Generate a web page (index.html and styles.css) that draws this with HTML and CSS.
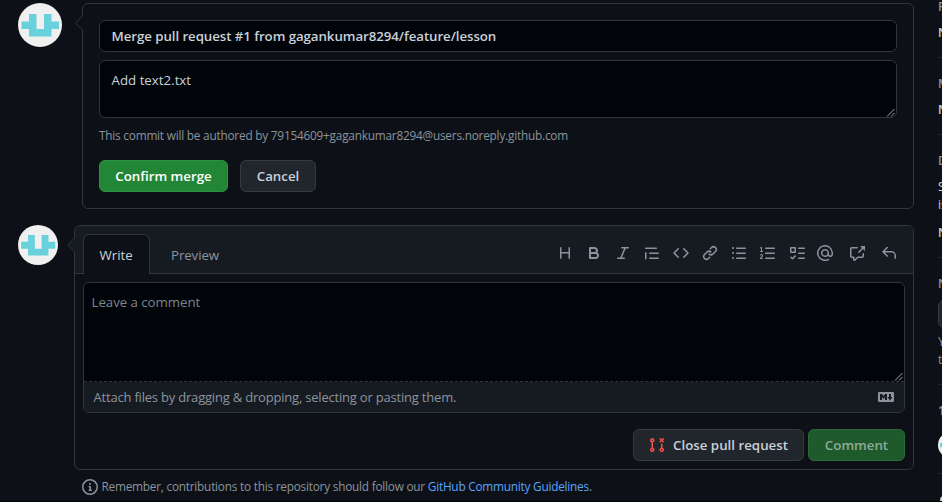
FILE: index.html
```html
<!DOCTYPE html>
<html lang="en">
<head>
<meta charset="utf-8">
<title>Pull request</title>
<link rel="stylesheet" href="styles.css">
</head>
<body>
<svg class="defs" width="0" height="0">
  <symbol id="avatar" viewBox="0 0 44 44"><rect width="44" height="44" fill="#f0f0f0"/><path fill="#69d1db" d="M11 11h7.500v15h7.500V11h7.500v7.500H41V26h-7.500v7.500h-22.500V26H3.500v-7.500H11z"/></symbol>
</svg>
<div class="page">
  <main class="thread">
    <section class="row merge-row">
      <svg class="avatar avatar-lg"><use href="#avatar"/></svg>
      <div class="box merge-box">
        <svg class="caret" viewBox="0 0 8 16"><path class="caret-dark" d="M8 .5L.7 8 8 15.500"/></svg>
        <div class="field title-field"><span class="t-title">Merge pull request #1 from gagankumar8294/feature/lesson</span></div>
        <div class="field body-field"><span class="t-add">Add text2.txt</span><svg class="grip" viewBox="0 0 9 9"><path d="M1 8.500L8.500 1M5 8.500L8.500 5"/></svg></div>
        <p class="author"><span class="t-author">This commit will be authored by 79154609+gagankumar8294@users.noreply.github.com</span></p>
        <div class="actions">
          <button class="btn confirm">Confirm merge</button>
          <button class="btn cancel">Cancel</button>
        </div>
      </div>
    </section>
    <section class="row comment-row">
      <svg class="avatar avatar-md"><use href="#avatar"/></svg>
      <div class="box comment-box">
        <svg class="caret" viewBox="0 0 8 16"><path class="caret-light" d="M8 .5L.7 8 8 15.500"/></svg>
        <header class="tabs">
          <div class="tab active"><span class="t-write">Write</span></div>
          <div class="tab preview"><span class="t-preview">Preview</span></div>
          <div class="tools">
            <svg class="icon" viewBox="0 0 16 16"><path d="M3.750 2a.75.75 0 01.75.75V7h7V2.750a.75.75 0 011.500 0v10.500a.75.75 0 01-1.500 0V8.500h-7v4.750a.75.75 0 01-1.500 0V2.750A.75.75 0 013.750 2z"/></svg>
            <svg class="icon" viewBox="0 0 16 16"><path fill-rule="evenodd" d="M4 2a1 1 0 00-1 1v10a1 1 0 001 1h5.500a3.500 3.500 0 001.852-6.470A3.500 3.500 0 008.500 2H4zm4.500 5a1.500 1.500 0 100-3H5v3h3.500zM5 9v3h4.500a1.500 1.500 0 000-3H5z"/></svg>
            <svg class="icon" viewBox="0 0 16 16"><path d="M6 2.750A.75.75 0 016.750 2h6.500a.75.75 0 010 1.500h-2.505l-3.858 9H9.250a.75.75 0 010 1.500h-6.500a.75.75 0 010-1.500h2.505l3.858-9H6.750A.75.75 0 016 2.750z"/></svg>
            <svg class="icon" viewBox="0 0 16 16"><path d="M1.750 2.500a.75.75 0 000 1.500h10.500a.75.75 0 000-1.500H1.750zm4 5a.75.75 0 000 1.500h8.500a.75.75 0 000-1.500h-8.500zm0 5a.75.75 0 000 1.500h8.500a.75.75 0 000-1.500h-8.500zM2.500 7.750a.75.75 0 00-1.500 0v6a.75.75 0 001.500 0v-6z"/></svg>
            <svg class="icon" viewBox="0 0 16 16"><path d="M4.720 3.220a.75.75 0 011.060 1.060L2.060 8l3.720 3.720a.75.75 0 11-1.060 1.060L.47 8.530a.75.75 0 010-1.060l4.250-4.250zm6.560 0a.75.75 0 10-1.060 1.060L13.940 8l-3.720 3.720a.75.75 0 101.060 1.060l4.250-4.250a.75.75 0 000-1.060l-4.250-4.250z"/></svg>
            <svg class="icon" viewBox="0 0 16 16"><path d="M7.775 3.275a.75.75 0 001.060 1.060l1.250-1.250a2 2 0 112.830 2.830l-2.500 2.500a2 2 0 01-2.830 0 .75.75 0 00-1.060 1.060 3.500 3.500 0 004.950 0l2.500-2.500a3.500 3.500 0 00-4.950-4.950l-1.250 1.250zm-4.690 9.640a2 2 0 010-2.830l2.500-2.500a2 2 0 012.830 0 .75.75 0 001.060-1.060 3.500 3.500 0 00-4.950 0l-2.500 2.500a3.500 3.500 0 004.950 4.950l1.250-1.250a.75.75 0 00-1.060-1.060l-1.250 1.250a2 2 0 01-2.830 0z"/></svg>
            <svg class="icon" viewBox="0 0 16 16"><path d="M2 4a1 1 0 100-2 1 1 0 000 2zm3.750-1.500a.75.75 0 000 1.500h8.500a.75.75 0 000-1.500h-8.500zm0 5a.75.75 0 000 1.500h8.500a.75.75 0 000-1.500h-8.500zm0 5a.75.75 0 000 1.500h8.500a.75.75 0 000-1.500h-8.500zM3 8a1 1 0 11-2 0 1 1 0 012 0zm-1 6a1 1 0 100-2 1 1 0 000 2z"/></svg>
            <svg class="icon" viewBox="0 0 16 16"><path d="M2.003 2.500a.5.5 0 00-.723-.447l-1.003.5a.5.5 0 00.446.895l.28-.14V6H.5a.5.5 0 000 1h2.006a.5.5 0 100-1h-.503V2.500zM5 3.250a.75.75 0 01.75-.75h8.500a.75.75 0 010 1.500h-8.500A.75.75 0 015 3.250zm0 5a.75.75 0 01.75-.75h8.500a.75.75 0 010 1.500h-8.500A.75.75 0 015 8.250zm0 5a.75.75 0 01.75-.75h8.500a.75.75 0 010 1.500h-8.500a.75.75 0 01-.75-.75zM.924 10.320a.851.851 0 01.147-.157A.66.66 0 011.500 10c.195 0 .306.068.374.146a.57.57 0 01.128.376c0 .453-.269.682-.8 1.078l-.035.025C.692 11.980 0 12.495 0 13.500a.5.5 0 00.5.5h2.003a.5.5 0 000-1H1.146c.132-.197.351-.372.654-.597l.047-.035c.47-.35 1.156-.858 1.156-1.845 0-.365-.118-.744-.377-1.038-.268-.303-.658-.484-1.126-.484-.48 0-.84.202-1.068.392a1.858 1.858 0 00-.348.384.5.5 0 00.84.543z"/></svg>
            <svg class="icon" viewBox="0 0 16 16"><path fill-rule="evenodd" d="M2.500 3.500v3h3v-3h-3zM2 2a1 1 0 00-1 1v4a1 1 0 001 1h4a1 1 0 001-1V3a1 1 0 00-1-1H2zm4.655 8.595a.75.75 0 010 1.060L4.030 14.280a.75.75 0 01-1.060 0l-1.500-1.500a.75.75 0 111.060-1.060l.97.97 2.095-2.095a.75.75 0 011.060 0zM9.750 2.500a.75.75 0 000 1.500h5.500a.75.75 0 000-1.500h-5.500zm0 5a.75.75 0 000 1.500h5.500a.75.75 0 000-1.500h-5.500zm0 5a.75.75 0 000 1.500h5.500a.75.75 0 000-1.500h-5.500z"/></svg>
            <svg class="icon mention" viewBox="0 0 16 16"><path d="M4.750 2.370a6.500 6.500 0 006.500 11.260.75.75 0 01.75 1.298 8 8 0 113.994-7.273.754.754 0 01.006.095v1.500a2.750 2.750 0 01-5.072 1.475A4 4 0 1112 8v1.250a1.250 1.250 0 002.500 0V7.867a6.500 6.500 0 00-9.750-5.496V2.370zM10.500 8a2.500 2.500 0 10-5 0 2.500 2.500 0 005 0z"/></svg>
            <svg class="icon wide" viewBox="0 0 16 16"><path d="M16 1.250v4.146a.25.25 0 01-.427.177L14.030 4.030l-3.750 3.750a.75.75 0 11-1.060-1.060l3.750-3.750-1.543-1.543A.25.25 0 0111.604 1h4.146a.25.25 0 01.25.25zM2.750 3.500a.25.25 0 00-.25.25v7.500c0 .138.112.25.25.25h2a.75.75 0 01.75.75v2.190l2.720-2.720a.75.75 0 01.53-.22h4.500a.25.25 0 00.25-.25v-2.500a.75.75 0 111.500 0v2.500A1.750 1.750 0 0113.250 13H9.060l-2.573 2.573A1.457 1.457 0 014 14.543V13H2.750A1.750 1.750 0 011 11.250v-7.500C1 2.784 1.784 2 2.750 2h5.500a.75.75 0 010 1.500h-5.500z"/></svg>
            <svg class="icon wide" viewBox="0 0 16 16"><path d="M6.780 1.970a.75.75 0 010 1.060L3.810 6h6.440A4.750 4.750 0 0115 10.750v2.500a.75.75 0 01-1.500 0v-2.500a3.250 3.250 0 00-3.250-3.250H3.810l2.970 2.970a.75.75 0 11-1.060 1.060L1.470 7.280a.75.75 0 010-1.060l4.250-4.250a.75.75 0 011.060 0z"/></svg>
          </div>
        </header>
        <div class="editor">
          <div class="input"><span class="t-leave">Leave a comment</span><svg class="grip" viewBox="0 0 9 9"><path d="M1 8.500L8.500 1M5 8.500L8.500 5"/></svg></div>
          <div class="attach"><span class="t-attach">Attach files by dragging &amp; dropping, selecting or pasting them.</span>
            <svg class="icon" viewBox="0 0 16 16"><path fill-rule="evenodd" d="M14.850 3H1.150C.52 3 0 3.520 0 4.150v7.690C0 12.480.52 13 1.150 13h13.690c.64 0 1.150-.52 1.150-1.150v-7.700C16 3.520 15.480 3 14.850 3zM9 11H7V8L5.500 9.920 4 8v3H2V5h2l1.500 2L7 5h2v6zm2.990.5L9.500 8H11V5h2v3h1.500l-2.510 3.500z"/></svg>
          </div>
        </div>
        <div class="submit">
          <button class="btn close"><svg class="icon" viewBox="0 0 16 16"><path d="M10.720 1.227a.75.75 0 011.060 0l.97.97.97-.97a.75.75 0 111.060 1.061l-.97.97.97.97a.75.75 0 01-1.060 1.060l-.97-.97-.97.97a.75.75 0 11-1.060-1.060l.97-.97-.97-.97a.75.75 0 010-1.061zM12.750 6.500a.75.75 0 00-.75.75v3.378a2.251 2.251 0 101.500 0V7.250a.75.75 0 00-.75-.75zm0 5.500a.75.75 0 100 1.500.75.75 0 000-1.500zM2.500 3.250a.75.75 0 111.500 0 .75.75 0 01-1.500 0zM3.250 1a2.250 2.250 0 00-.75 4.372v5.256a2.251 2.251 0 101.500 0V5.372A2.250 2.250 0 003.250 1zm0 11a.75.75 0 100 1.500.75.75 0 000-1.500z" fill-rule="evenodd"/></svg><span>Close pull request</span></button>
          <button class="btn comment" disabled>Comment</button>
        </div>
      </div>
    </section>
    <p class="note"><svg class="icon" viewBox="0 0 16 16"><path d="M8 1.500a6.500 6.500 0 100 13 6.500 6.500 0 000-13zM0 8a8 8 0 1116 0A8 8 0 010 8zm6.500-.25A.75.75 0 017.250 7h1a.75.75 0 01.75.75v2.750h.25a.75.75 0 010 1.500h-2a.75.75 0 010-1.500h.25v-2h-.25a.75.75 0 01-.75-.75zM8 6a1 1 0 100-2 1 1 0 000 2z" fill-rule="evenodd"/></svg><span class="t-note">Remember, contributions to this repository should follow our <a>GitHub Community Guidelines</a>.</span></p>
  </main>
  <aside class="side">
    <div class="item projects"><b>P</b><span>N</span></div>
    <div class="item milestone"><b>M</b><span>N</span></div>
    <div class="item development"><b>D</b><p>S<br>is</p><span>N</span></div>
    <div class="item notifications"><b>N</b><i class="side-btn"></i><p>Y<br>t</p></div>
    <div class="item participants"><b>1</b><svg class="avatar avatar-sm"><use href="#avatar"/></svg></div>
    <svg class="lock" viewBox="0 0 16 16"><path d="M4 4v2h-.25A1.750 1.750 0 002 7.750v5.500c0 .966.784 1.750 1.750 1.750h8.500V6H12V4a4 4 0 10-8 0zm6.500 2V4a2.500 2.500 0 10-5 0v2h5z"/></svg>
  </aside>
</div>
</body>
</html>
```
FILE: styles.css
```css
* { box-sizing: border-box; }
body {
  margin: 0;
  background: #0d1117;
  color: #c9d1d9;
  font: 13.3px/20px "Open Sans", "Noto Sans", sans-serif;
  overflow: hidden;
}
p { margin: 0; }
span { white-space: nowrap; }
.defs { position: absolute; }
.page { display: flex; width: 942px; height: 502px; overflow: hidden; border-bottom: 1px solid #02040a; }
.thread { width: 938px; flex: none; padding: 3px 24px 0 18px; }
.row { display: flex; align-items: flex-start; }
.avatar { flex: none; border-radius: 50%; display: block; }
.avatar-lg { width: 44px; height: 44px; margin-right: 20px; }
.avatar-md { width: 40px; height: 40px; margin-right: 16px; }
.box { position: relative; border: 1px solid #30363d; border-radius: 6px; }
.caret { position: absolute; left: -8px; width: 8px; height: 16px; stroke: #30363d; }
.caret-dark { fill: #0d1117; }
.caret-light { fill: #161b22; }
.merge-box { width: 832px; height: 206px; padding: 16px; }
.merge-box .caret { top: 11px; }
.field { border: 1px solid #30363d; border-radius: 6px; background: #010409; padding: 5px 12px 5px 11.5px; position: relative; }
.title-field { height: 32px; font-weight: 600; }
.t-title { letter-spacing: -.075px; }
.body-field { height: 58px; margin-top: 8px; padding-top: 9px; }
.grip { position: absolute; right: 1px; bottom: 0; width: 9px; height: 9px; fill: none; stroke: #b5b8bc; stroke-width: .9; }
.author { margin-top: 7px; color: #8b949e; font-size: 11.8px; }
.t-author { letter-spacing: -.21px; }
.actions { display: flex; gap: 12px; margin-top: 15px; }
.btn {
  height: 32px; padding: 0; border: 1px solid #363b42; border-radius: 6px;
  background: #21262d; color: #c9d1d9; font: 600 13.3px/20px "Open Sans", "Noto Sans", sans-serif;
  display: flex; align-items: center; justify-content: center; white-space: nowrap;
}
.confirm { width: 129px; background: #238636; border-color: #2f9142; color: #fff; }
.cancel { width: 76px; }
.comment-row { margin-top: 16px; }
.comment-box { width: 840px; height: 245px; }
.comment-box .caret { top: 11px; }
.tabs { height: 48px; display: flex; align-items: flex-end; padding-left: 8px; background: #161b22; border-bottom: 1px solid #30363d; border-radius: 5px 5px 0 0; }
.tab { height: 40px; padding: 10px 16px 0; margin-bottom: -1px; }
.preview { padding-top: 11px; margin-left: 5px; color: #8b949e; letter-spacing: -.1px; }
.active { width: 67px; padding-left: 15.5px; background: #0d1117; border: 1px solid #30363d; border-bottom: 0; border-radius: 6px 6px 0 0; }
.icon { width: 16px; height: 16px; flex: none; fill: #8b949e; }
.tools { margin-left: auto; padding-right: 16px; display: flex; gap: 13px; align-self: center; margin-top: 7px; }
.mention { margin-left: -1px; }
.wide { margin-left: 3px; }
.editor { margin: 8px 8px 0; height: 131px; border: 1px solid #30363d; border-radius: 6px; overflow: hidden; }
.input { height: 99px; background: #010409; border-bottom: 1px dashed #30363d; padding: 9px 7.5px; position: relative; color: #7d858f; }
.t-leave { letter-spacing: -.05px; }
.attach { height: 30px; padding: 0 10px 0 9.5px; display: flex; align-items: center; justify-content: space-between; background: #161b22; color: #8b949e; }
.t-attach { font-size: 13px; letter-spacing: -.2px; }
.submit { display: flex; justify-content: flex-end; gap: 4px; margin: 16px 8px 0; }
.close { width: 171px; gap: 8px; }
.close .icon { fill: #f85149; }
.comment { width: 97px; background: #1e5a2c; border-color: #296a38; color: #8fac96; }
.note { display: flex; align-items: center; gap: 3.5px; margin: 8px 0 0 64px; color: #8b949e; font-size: 11.8px; }
.t-note { letter-spacing: -.22px; margin-top: -2px; }
.note a { color: #58a6ff; }
.side { width: 4px; flex: none; overflow: hidden; font-size: 12px; line-height: 18px; }
.item { display: flow-root; border-bottom: 1px solid #21262d; }
.item b, .item span { display: block; }
.item b { color: #8b949e; font-weight: 600; }
.item span { font-weight: 600; }
.projects { height: 58px; }
.projects b { margin-top: -2px; }
.projects span, .milestone span { margin-top: 8px; }
.milestone { height: 77px; padding-top: 17px; }
.development { height: 123px; padding-top: 17px; }
.development p { margin-top: 8px; }
.development span { margin-top: 10px; }
.notifications { height: 127px; padding-top: 17px; }
.side-btn { display: block; width: 60px; height: 28px; margin: 7px 0 5px; border: 1px solid #363b42; border-radius: 6px; background: #21262d; }
.notifications p { color: #8b949e; }
.participants { height: 89px; padding-top: 17px; }
.avatar-sm { width: 26px; height: 26px; margin-top: 12px; }
.lock { display: block; width: 16px; height: 16px; margin: 22px 0 0 -2px; fill: #c9d1d9; }
```
